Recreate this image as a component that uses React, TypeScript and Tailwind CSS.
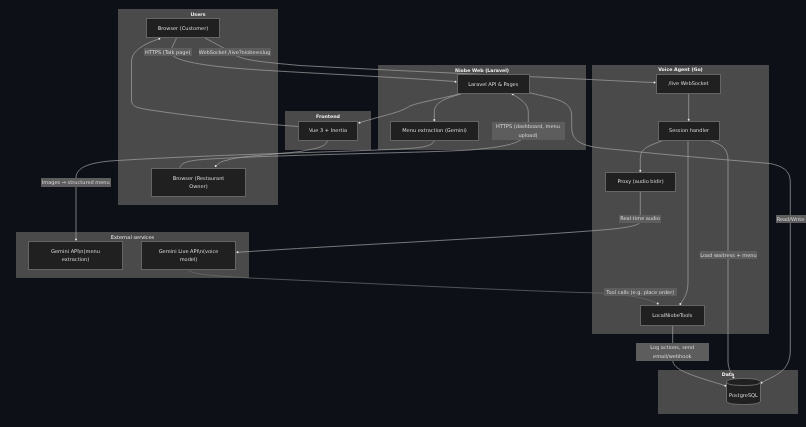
const edges = [
  // customer -> laravel
  "M176.5 38 L170 52 C172 59 190 64 233 68 C280 72 380 76 455 81.5",
  // customer -> websocket
  "M205 38 L233 53 C238 60 262 62 300 65.5 C380 70 520 76 590 79.5 C620 81 640 82 654.5 82.5",
  // vue -> customer
  "M298 126.5 C250 123 190 116 150 110 C138 108 131.5 107 131.5 100 L131.5 62 C131.5 50 145 44 158.5 39",
  // laravel -> vue
  "M462 93.3 C440 99 420 102 410 106 C398 113 396 112 360 122.5",
  // laravel -> menu extraction
  "M462.5 93.3 C448 98 434.3 101 434.3 112 L434.3 120",
  // vue -> restaurant owner
  "M327.7 140.3 C326 148 312 149 300 151.5 C270 155 240 156 228 160 C222 161 218 163 215.5 166.5",
  // menu extraction -> gemini
  "M434.3 140.3 C433 147 418 148 400 149 C340 152 200 155 110 161 C90 163 76 167 76 178 L76 240",
  // owner -> laravel
  "M180 167.7 C181 161 195 160 210 159 C300 154 420 153 470 150 C500 147 528 145 528.3 128 L528.3 112 C528 103 520 99 513 94.5",
  // laravel -> postgres
  "M529.3 92.7 C555 99 571.7 100 571.7 116 L571.7 128 C572 150 600 147 640 152 C690 157 730 160 770 163.5 C782 166 790.3 170 790.3 182 L790.3 350 C790.3 372 775 375 762 382.5",
  // live -> session
  "M688.7 93.3 L688.7 120.5",
  // session -> proxy
  "M663.3 140.3 C652 145 640.3 147 640.3 158 L640.3 171.5",
  // session -> localniobe
  "M688 140.3 L688 282 C688 294 684 298 680.3 304.5",
  // session -> postgres
  "M709.3 140.3 C720 144 728 147 728 160 L728 362 C728 368 731 373 733.5 377.5",
  // proxy -> gemini live
  "M640.3 191.3 L640.3 222 C638 227 615 229 593 230.7 C500 238 330 246 237.5 252.3",
  // localniobe -> postgres
  "M672.7 325.3 L672.7 360 C673 370 690 375 725.5 385.7",
];

const dots = [
  [455.5, 81.7], [654.5, 82.5], [159.3, 38.7], [359.5, 122.7], [434.3, 120], [215.7, 166],
  [76, 239.5], [512.7, 94.3], [761.5, 382.7], [688.7, 119.7], [640.3, 170.7], [680.3, 304],
  [733.5, 377.5], [237.5, 252.3], [657.7, 303.5], [725.3, 385.7],
];

function Cluster({ className, title, titleClass }: { className: string; title: string; titleClass?: string }) {
  return (
    <div className={`absolute bg-[#494a49] ${className}`}>
      <p className={`pt-[0.5px] text-center leading-[9px] text-[#ececec] ${titleClass ?? "text-[4.7px] font-bold"}`}>{title}</p>
    </div>
  );
}

function Node({ className, children }: { className: string; children: React.ReactNode }) {
  return (
    <div className={`absolute flex items-center justify-center border border-[#656565] bg-[#1f201f] text-center text-[5.05px] leading-[8.5px] text-[#dadada] ${className}`}>
      <span>{children}</span>
    </div>
  );
}

function Label({ className, children }: { className: string; children: React.ReactNode }) {
  return (
    <div className={`absolute flex items-center justify-center bg-[#5c5d5c] text-center text-[5.05px] leading-[8.5px] text-[#dadada] ${className}`}>
      <span>{children}</span>
    </div>
  );
}

export default function App() {
  return (
    <div className="relative h-[427px] w-[806px] overflow-hidden bg-[#0d1117] font-['DejaVu_Sans',sans-serif] blur-[0.3px]">
      <Cluster className="left-[118px] top-[9px] h-[196px] w-[160px]" title="Users" />
      <Cluster className="left-[285px] top-[111px] h-[38.5px] w-[86px]" title="Frontend" />
      <Cluster className="left-[378px] top-[65px] h-[84.5px] w-[208px]" title="Niobe Web (Laravel)" />
      <Cluster className="left-[592px] top-[64.5px] h-[269.5px] w-[177px]" title="Voice Agent (Go)" />
      <Cluster className="left-[16px] top-[232px] h-[46px] w-[233px]" title="External services" titleClass="text-[5.05px]" />
      <Cluster className="left-[658px] top-[369.5px] h-[44.5px] w-[140px]" title="Data" />

      <svg className="absolute left-0 top-0" width="806" height="427" viewBox="0 0 806 427" fill="none">
        {edges.map((d) => (
          <path key={d} d={d} stroke="#a3a3a3" strokeWidth="0.7" />
        ))}
        {/* gemini live -> tools is dimmer than the others */}
        <path d="M188.3 269.3 C190 275 220 276 250 278 C360 283 500 290 580 292.5 C610 293 640 295 657.7 303.5" stroke="#6f6f6f" strokeWidth="0.7" />
        {dots.map(([x, y]) => (
          <circle key={`${x}-${y}`} cx={x} cy={y} r="1" fill="#e8e8e8" />
        ))}
      </svg>

      <Node className="left-[146px] top-[18px] h-[20px] w-[74px]">Browser (Customer)</Node>
      <Node className="left-[151px] top-[167.5px] h-[29px] w-[95px]">Browser (Restaurant<br />Owner)</Node>
      <Node className="left-[298px] top-[120.5px] h-[20px] w-[60px]">Vue 3 + Inertia</Node>
      <Node className="left-[390px] top-[120.5px] h-[20px] w-[89px]">Menu extraction (Gemini)</Node>
      <Node className="left-[457px] top-[74px] h-[20px] w-[72.5px]">Laravel API &amp; Pages</Node>
      <Node className="left-[656px] top-[73.5px] h-[20px] w-[65px]">/live WebSocket</Node>
      <Node className="left-[658px] top-[120.5px] h-[20px] w-[62px]">Session handler</Node>
      <Node className="left-[605px] top-[171.5px] h-[20px] w-[71px]">Proxy (audio bidir)</Node>
      <Node className="left-[640px] top-[305px] h-[20.5px] w-[64.5px]">LocalNiobeTools</Node>
      <Node className="left-[28px] top-[240.5px] h-[29px] w-[95px]">{"Gemini API\\n(menu"}<br />extraction)</Node>
      <Node className="left-[141px] top-[240.5px] h-[29px] w-[95px]">{"Gemini Live API\\n(voice"}<br />model)</Node>

      {/* postgres cylinder */}
      <svg className="absolute left-[726px] top-[378px]" width="35" height="27" viewBox="0 0 35 27" fill="none">
        <path d="M0.5 4 C0.5 1.5 8 0.5 17.5 0.5 C27 0.5 34.5 1.5 34.5 4 L34.5 23 C34.5 25.5 27 26.5 17.5 26.5 C8 26.5 0.5 25.5 0.5 23 Z" fill="#1f201f" stroke="#7a7a7a" strokeWidth="0.8" />
        <path d="M0.5 4 C0.5 6.5 8 7.5 17.5 7.5 C27 7.5 34.5 6.5 34.5 4" stroke="#7a7a7a" strokeWidth="0.8" />
      </svg>
      <div className="absolute left-[726px] top-[389px] flex h-[13px] w-[35px] items-center justify-center text-[5.05px] text-[#dadada]">PostgreSQL</div>

      <Label className="left-[144px] top-[47.5px] h-[8.5px] w-[47.5px] whitespace-nowrap">HTTPS (Talk page)</Label>
      <Label className="left-[198.5px] top-[47.5px] h-[8.5px] w-[72px] whitespace-nowrap">WebSocket /live?niobe=slug</Label>
      <Label className="left-[40.5px] top-[177.5px] h-[9px] w-[70.5px] whitespace-nowrap">{"Images → structured menu"}</Label>
      <Label className="left-[491.5px] top-[121.5px] h-[18px] w-[73px]">HTTPS (dashboard, menu<br />upload)</Label>
      <Label className="left-[619px] top-[214.5px] h-[8px] w-[42px] whitespace-nowrap">Real-time audio</Label>
      <Label className="left-[775.5px] top-[214.5px] h-[8.5px] w-[30px] whitespace-nowrap">Read/Write</Label>
      <Label className="left-[700px] top-[251px] h-[8px] w-[57px] whitespace-nowrap">Load waitress + menu</Label>
      <Label className="left-[604px] top-[288px] h-[7.5px] w-[72.5px] whitespace-nowrap">Tool calls (e.g. place order)</Label>
      <Label className="left-[636px] top-[343px] h-[17.5px] w-[72.5px]">Log actions, send<br />email/webhook</Label>
    </div>
  );
}
